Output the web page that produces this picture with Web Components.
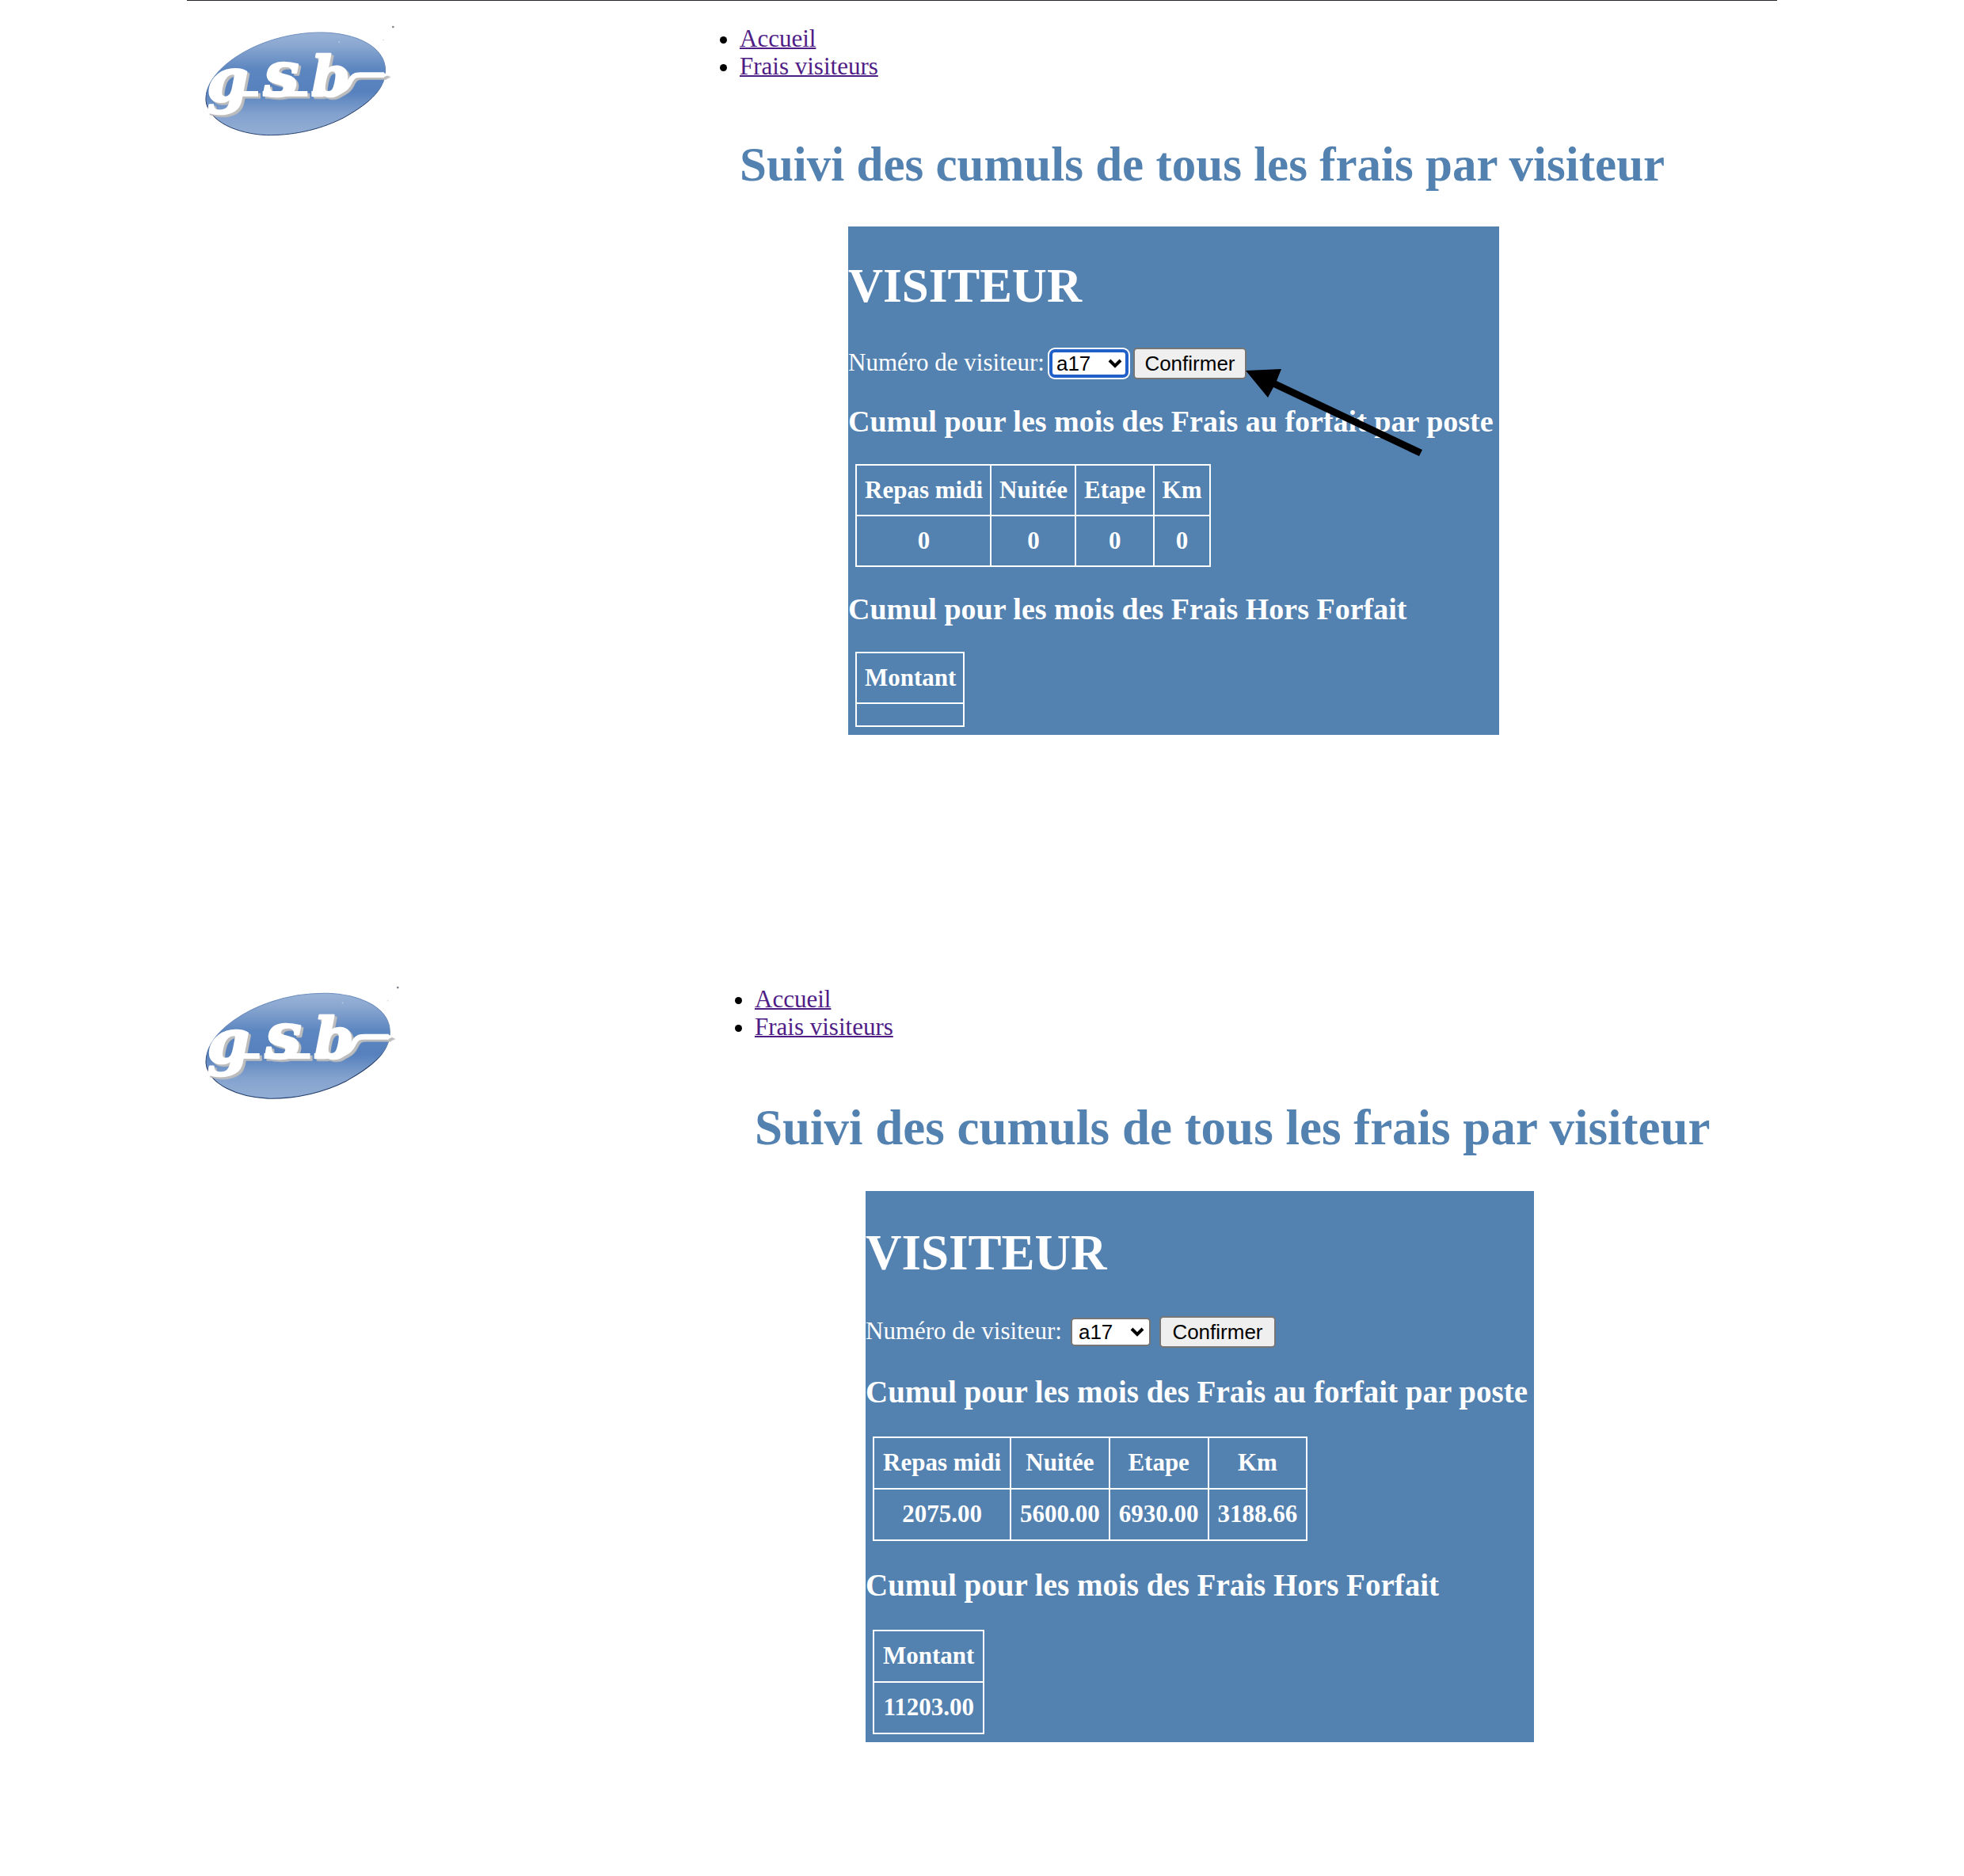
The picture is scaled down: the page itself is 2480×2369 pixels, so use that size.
<!DOCTYPE html>
<html lang="fr">
<head>
<meta charset="utf-8">
<title>GSB - Suivi des frais</title>
<style>
  body { margin: 0; background: #fff; font-family: "Liberation Serif", "Times New Roman", serif; font-size: 31px; line-height: 35px; color: #000; }
  main { display: flex; flex-direction: column; gap: 286px; margin: 0 236px; border-top: 1px solid #28242b; }
  .before {
    --rail: 698fr; --body: 1310fr; --logo: 242px; --title: 61px; --sub: 38px;
    --nav-gap: 72px; --title-gap: 43px; --indent: 137px; --pad-top: 40px; --pad-right: 7px;
    --form-gap: 43px; --sub-top: 31px; --sub-bottom: 32px;
    --cell: 13px 9px 14px 10px; --field-gap: 6px; --select: 100px; --button: 143px;
  }
  .after {
    --rail: 717fr; --body: 1291fr; --logo: 248px; --title: 63px; --sub: 39px;
    --nav-gap: 75px; --title-gap: 45px; --indent: 140px; --pad-top: 43px; --pad-right: 8px;
    --form-gap: 45px; --sub-top: 34px; --sub-bottom: 34px;
    --cell: 13px 11px 15px; --field-gap: 11px; --select: 101px; --button: 147px;
  }
</style>
</head>
<body>
<main>
  <frais-view class="before">
    <visiteur-form slot="form" focused></visiteur-form>
    <frais-table slot="forfait" heads="Repas midi|Nuitée|Etape|Km" values="0|0|0|0"></frais-table>
    <frais-table slot="hors" heads="Montant" values=""></frais-table>
    <pointer-arrow slot="over"></pointer-arrow>
  </frais-view>
  <frais-view class="after">
    <visiteur-form slot="form"></visiteur-form>
    <frais-table slot="forfait" heads="Repas midi|Nuitée|Etape|Km" values="2075.00|5600.00|6930.00|3188.66"></frais-table>
    <frais-table slot="hors" heads="Montant" values="11203.00"></frais-table>
  </frais-view>
</main>

<template id="t-logo">
  <style>
    :host { display: block; width: var(--logo); }
    svg { display: block; width: 100%; height: auto; }
    .letters { filter: drop-shadow(9px 8px 0 #bdbdbd); }
    text { font-family: "DejaVu Serif", serif; font-weight: bold; font-style: italic; fill: #fff; stroke: #fff; stroke-width: 8; stroke-linejoin: round; }
  </style>
  <svg viewBox="111 96 726 426" role="img" aria-label="Logo gsb">
    <defs>
      <linearGradient id="sky" x1="0" y1="0" x2="0" y2="1">
        <stop offset="0" stop-color="#9ab3d7"/>
        <stop offset=".12" stop-color="#8ba8d1"/>
        <stop offset=".36" stop-color="#5c86c0"/>
        <stop offset=".58" stop-color="#5681bd"/>
        <stop offset=".8" stop-color="#83a2ce"/>
        <stop offset="1" stop-color="#93aed5"/>
      </linearGradient>
      <linearGradient id="rim" x1="0" y1="0" x2="0" y2="1">
        <stop offset="0" stop-color="#6e8fc0"/>
        <stop offset=".5" stop-color="#5f80b3"/>
        <stop offset=".7" stop-color="#1d3157"/>
        <stop offset="1" stop-color="#24406e"/>
      </linearGradient>
    </defs>
    <path d="M120 385C118 345 135 300 195 248C290 168 430 125 560 126C690 128 800 180 800 270C800 350 720 405 640 450C540 500 440 516 350 515C240 510 130 465 120 385Z" fill="url(#sky)" stroke="url(#rim)" stroke-width="3"/>
    <g class="letters">
      <text x="124" y="384" font-size="224">g</text>
      <text x="340" y="366" font-size="236">s</text>
      <text x="520" y="366" font-size="208">b</text>
      <path d="M245 358H318M335 358H505M520 358H575C620 358 650 345 664 315C676 290 685 287 705 287H795" fill="none" stroke="#fff" stroke-width="20" stroke-linejoin="round"/>
      <path d="M790 277L812 287L790 297Z" fill="#fff"/>
    </g>
    <circle cx="829" cy="105" r="4" fill="#7d8088"/>
    <circle cx="792" cy="154" r="2" fill="#b9bcc4"/>
    <circle cx="625" cy="162" r="3" fill="#b5c8e2"/>
  </svg>
</template>

<template id="t-menu">
  <style>
    :host { display: block; }
    ul { margin: 0; padding: 0; }
    a { color: #4f1d86; text-decoration: underline; text-decoration-thickness: 2px; }
  </style>
  <nav><ul><li><a href="#accueil">Accueil</a></li><li><a href="#frais">Frais visiteurs</a></li></ul></nav>
</template>

<template id="t-form">
  <style>
    :host { display: block; }
    form { display: flex; align-items: center; gap: var(--field-gap); margin: 0; }
    label { align-self: flex-start; line-height: 37px; }
    .pick { position: relative; display: flex; }
    select, button { box-sizing: border-box; margin: 0; color: #000; font: 26px/30px "Liberation Sans", Arial, sans-serif; border: 2px solid #767676; border-radius: 5px; }
    select { appearance: none; width: var(--select); height: 36px; padding: 0 0 0 8px; background: #fff; outline: none; }
    :host([focused]) select { border: 4px solid #2160c9; border-radius: 7px; padding: 0 0 0 5px; line-height: 28px; box-shadow: 0 0 0 2px #fff; }
    .pick svg { position: absolute; right: 8px; top: 12px; width: 18px; height: 12px; pointer-events: none; }
    button { width: var(--button); height: 40px; padding: 0; background: #efefef; }
  </style>
  <form>
    <label for="num">Numéro de visiteur:</label>
    <span class="pick">
      <select id="num"><option>a17</option></select>
      <svg viewBox="0 0 18 12"><path d="M2 2L9 9L16 2" fill="none" stroke="#000" stroke-width="4"/></svg>
    </span>
    <button type="button">Confirmer</button>
  </form>
</template>

<template id="t-table">
  <style>
    :host { display: block; margin-left: 9px; }
    table { border-collapse: collapse; font: inherit; color: inherit; }
    th, td { border: 2px solid #fff; padding: var(--cell); font-weight: bold; text-align: center; }
  </style>
  <table><thead><tr></tr></thead><tbody><tr></tr></tbody></table>
</template>

<template id="t-arrow">
  <style>
    :host { position: absolute; left: 502px; top: 178px; pointer-events: none; }
    svg { display: block; width: 226px; height: 114px; }
  </style>
  <svg viewBox="0 0 226 114"><path d="M0 4L45 2L39 17L223 104L219 112L35 25L28 38Z"/></svg>
</template>

<template id="t-view">
  <style>
    :host { display: grid; grid-template-columns: minmax(0, var(--rail)) minmax(0, var(--body)); padding-top: 30px; }
    gsb-logo { margin-left: 21px; }
    h1, h2, h3 { margin: 0; font-weight: bold; white-space: nowrap; }
    h1, h2 { font-size: var(--title); line-height: 70px; }
    h1 { margin: var(--nav-gap) 0 var(--title-gap); color: #5381b0; }
    h2 { margin-bottom: var(--form-gap); }
    h3 { margin: var(--sub-top) 0 var(--sub-bottom); font-size: var(--sub); line-height: 44px; }
    .panel { position: relative; width: fit-content; margin-left: var(--indent); padding: var(--pad-top) var(--pad-right) 10px 0; background: #5381b0; color: #fff; }
  </style>
  <gsb-logo></gsb-logo>
  <div>
    <gsb-menu></gsb-menu>
    <h1>Suivi des cumuls de tous les frais par visiteur</h1>
    <section class="panel">
      <h2>VISITEUR</h2>
      <slot name="form"></slot>
      <h3>Cumul pour les mois des Frais au forfait par poste</h3>
      <slot name="forfait"></slot>
      <h3>Cumul pour les mois des Frais Hors Forfait</h3>
      <slot name="hors"></slot>
      <slot name="over"></slot>
    </section>
  </div>
</template>

<script>
  const shadowFrom = (host, id) => {
    const root = host.attachShadow({ mode: "open" });
    root.append(document.getElementById(id).content.cloneNode(true));
    return root;
  };
  class GsbLogo extends HTMLElement { constructor() { super(); shadowFrom(this, "t-logo"); } }
  class GsbMenu extends HTMLElement { constructor() { super(); shadowFrom(this, "t-menu"); } }
  class VisiteurForm extends HTMLElement { constructor() { super(); shadowFrom(this, "t-form"); } }
  class PointerArrow extends HTMLElement { constructor() { super(); shadowFrom(this, "t-arrow"); } }
  class FraisView extends HTMLElement { constructor() { super(); shadowFrom(this, "t-view"); } }
  class FraisTable extends HTMLElement {
    constructor() { super(); shadowFrom(this, "t-table"); }
    connectedCallback() {
      const fill = (row, tag, text) => row.replaceChildren(...text.split("|").map(t => {
        const cell = document.createElement(tag);
        cell.textContent = t;
        return cell;
      }));
      fill(this.shadowRoot.querySelector("thead tr"), "th", this.getAttribute("heads"));
      fill(this.shadowRoot.querySelector("tbody tr"), "td", this.getAttribute("values"));
    }
  }
  customElements.define("gsb-logo", GsbLogo);
  customElements.define("gsb-menu", GsbMenu);
  customElements.define("visiteur-form", VisiteurForm);
  customElements.define("frais-table", FraisTable);
  customElements.define("pointer-arrow", PointerArrow);
  customElements.define("frais-view", FraisView);
</script>
</body>
</html>
